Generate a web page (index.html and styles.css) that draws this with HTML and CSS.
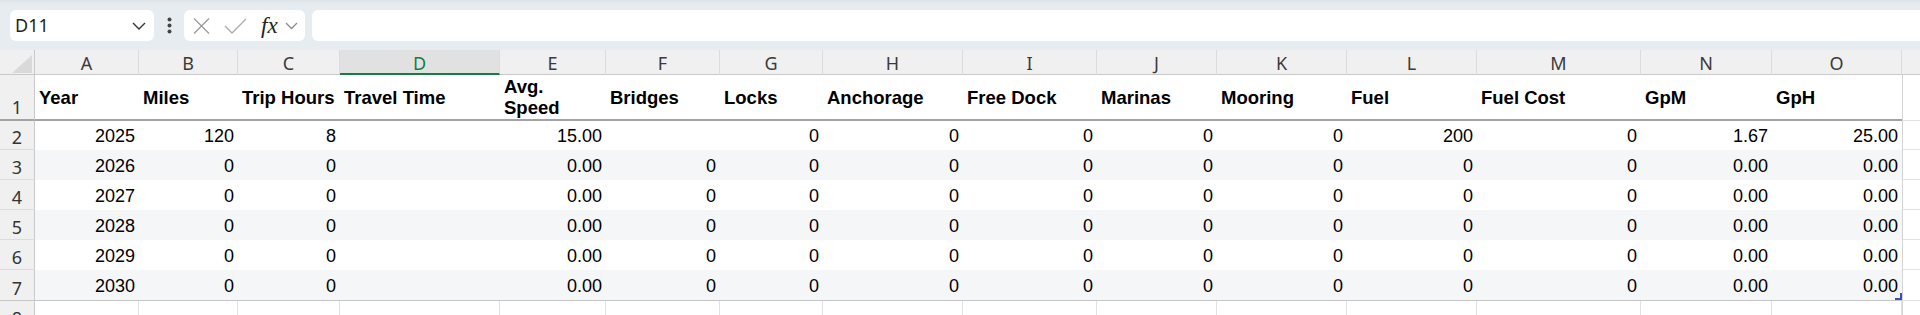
FILE: index.html
```html
<!DOCTYPE html>
<html lang="en">
<head>
  <meta charset="UTF-8" />
  <title>Trip Sheet</title>
  <link rel="stylesheet" href="styles.css">
</head>
<body>
<div class="toolbar">
  <div class="namebox">
    <span>D11</span>
    <svg class="chev" width="14" height="8" viewBox="0 0 14 8"><polyline points="1,1 7,7 13,1" fill="none" stroke="#333" stroke-width="1.4"/></svg>
  </div>
  <div class="more">
    <svg width="5" height="17" viewBox="0 0 5 17"><circle cx="2.5" cy="2.5" r="2" fill="#444"/><circle cx="2.5" cy="8.5" r="2" fill="#444"/><circle cx="2.5" cy="14.5" r="2" fill="#444"/></svg>
  </div>
  <div class="fxbox">
    <svg class="cancel" width="17" height="16" viewBox="0 0 17 16"><path d="M1 0.5 L16 15.5 M16 0.5 L1 15.5" stroke="#9b9b9b" stroke-width="1.3" fill="none"/></svg>
    <svg class="enter" width="23" height="16" viewBox="0 0 23 16"><polyline points="1,8 8,15 22,1" fill="none" stroke="#ababab" stroke-width="1.3"/></svg>
    <span class="fx">fx</span>
    <svg class="chev-sm" width="13" height="8" viewBox="0 0 13 8"><polyline points="1,1 6.5,6.5 12,1" fill="none" stroke="#8a8a8a" stroke-width="1.3"/></svg>
  </div>
  <div class="formula"></div>
</div>

<div class="sheet">
  <div class="row colhead">
    <div class="corner"><i></i></div>
    <div>A</div><div>B</div><div>C</div><div class="sel">D</div><div>E</div>
    <div>F</div><div>G</div><div>H</div><div>I</div><div>J</div>
    <div>K</div><div>L</div><div>M</div><div>N</div><div>O</div>
    <div class="pad"></div>
  </div>

  <div class="row head">
    <div class="num">1</div>
    <div>Year</div><div>Miles</div><div>Trip Hours</div><div>Travel Time</div><div>Avg.<br>Speed</div>
    <div>Bridges</div><div>Locks</div><div>Anchorage</div><div>Free Dock</div><div>Marinas</div>
    <div>Mooring</div><div>Fuel</div><div>Fuel Cost</div><div>GpM</div><div>GpH</div>
    <div class="pad"></div>
  </div>

  <div class="row data">
    <div class="num">2</div>
    <div>2025</div><div>120</div><div>8</div><div></div><div>15.00</div>
    <div></div><div>0</div><div>0</div><div>0</div><div>0</div>
    <div>0</div><div>200</div><div>0</div><div>1.67</div><div>25.00</div>
    <div class="pad"></div>
  </div>

  <div class="row data alt">
    <div class="num">3</div>
    <div>2026</div><div>0</div><div>0</div><div></div><div>0.00</div>
    <div>0</div><div>0</div><div>0</div><div>0</div><div>0</div>
    <div>0</div><div>0</div><div>0</div><div>0.00</div><div>0.00</div>
    <div class="pad"></div>
  </div>

  <div class="row data">
    <div class="num">4</div>
    <div>2027</div><div>0</div><div>0</div><div></div><div>0.00</div>
    <div>0</div><div>0</div><div>0</div><div>0</div><div>0</div>
    <div>0</div><div>0</div><div>0</div><div>0.00</div><div>0.00</div>
    <div class="pad"></div>
  </div>

  <div class="row data alt">
    <div class="num">5</div>
    <div>2028</div><div>0</div><div>0</div><div></div><div>0.00</div>
    <div>0</div><div>0</div><div>0</div><div>0</div><div>0</div>
    <div>0</div><div>0</div><div>0</div><div>0.00</div><div>0.00</div>
    <div class="pad"></div>
  </div>

  <div class="row data">
    <div class="num">6</div>
    <div>2029</div><div>0</div><div>0</div><div></div><div>0.00</div>
    <div>0</div><div>0</div><div>0</div><div>0</div><div>0</div>
    <div>0</div><div>0</div><div>0</div><div>0.00</div><div>0.00</div>
    <div class="pad"></div>
  </div>

  <div class="row data alt last">
    <div class="num">7</div>
    <div>2030</div><div>0</div><div>0</div><div></div><div>0.00</div>
    <div>0</div><div>0</div><div>0</div><div>0</div><div>0</div>
    <div>0</div><div>0</div><div>0</div><div>0.00</div><div class="corner-cell">0.00</div>
    <div class="pad"></div>
  </div>

  <div class="row blank">
    <div class="num">8</div>
    <div></div><div></div><div></div><div></div><div></div>
    <div></div><div></div><div></div><div></div><div></div>
    <div></div><div></div><div></div><div></div><div></div>
    <div class="pad"></div>
  </div>
</div>
</body>
</html>
```

FILE: styles.css
```css
* { box-sizing: border-box; margin: 0; padding: 0; }
html, body { height: 100%; overflow: hidden; background: #fff; }
body { font-family: "Liberation Sans", Arial, sans-serif; color: #000; }

/* formula bar */
.toolbar { height: 50px; display: flex; align-items: flex-start; padding: 10px 0 0 10px; background: linear-gradient(#dde2e7, #e7ecf1 4px); }
.namebox { width: 144px; height: 31px; background: #fff; border-radius: 6px; display: flex; align-items: center; justify-content: space-between; padding: 0 8px 0 5px; font-family: "Noto Sans", sans-serif; font-size: 18px; color: #1f1f1f; }
.namebox span { line-height: 31px; }
.more { width: 30px; height: 31px; display: flex; align-items: center; justify-content: center; }
.fxbox { width: 121px; height: 31px; background: #fff; border-radius: 6px; display: flex; align-items: center; padding-left: 9px; }
.fxbox .enter { margin-left: 14px; }
.fxbox .fx { margin-left: 14px; font-family: "Liberation Serif", serif; font-style: italic; font-size: 23px; color: #222; line-height: 31px; }
.fxbox .chev-sm { margin-left: 7px; }
.formula { flex: 1; height: 31px; margin-left: 7px; background: #fff; border-radius: 6px 0 0 6px; }

/* grid */
.sheet { display: grid; grid-template-columns: 35px 104px 99px 102px 160px 106px 114px 103px 140px 134px 120px 130px 130px 164px 131px 130px 1fr; grid-template-rows: 25px 46px 29px 30px 30px 30px 30px 31px 30px; }
.row { display: contents; }

.colhead > div { background: #f0f0f0; border-bottom: 1px solid #c9c9c9; border-right: 1px solid #dcdcdc; font-family: "Noto Sans", sans-serif; font-size: 18px; color: #3a3a3a; text-align: center; line-height: 22px; padding-top: 2px; }
.colhead > .sel { background: #e1e1e1; color: #137e43; border-bottom: 2px solid #137e43; }
.colhead > .corner { position: relative; border-right-color: #c9c9c9; }
.corner i { position: absolute; right: 2px; bottom: 1px; width: 20px; height: 18px; background: #d9d9d9; clip-path: polygon(100% 0, 100% 100%, 0 100%); }
.colhead > .pad { border-right: none; }

.num { background: #f0f0f0; border-right: 1px solid #c9c9c9; border-bottom: 1px solid #dcdcdc; font-family: "Noto Sans", sans-serif; font-size: 18px; color: #333; display: flex; align-items: flex-end; justify-content: center; line-height: 18px; padding-bottom: 3px; }

.head > div { font-weight: bold; font-size: 18.5px; line-height: 21px; padding-left: 4px; white-space: nowrap; display: flex; align-items: center; border-bottom: 2px solid #a3a3a3; }
.head > .num { font-weight: normal; font-size: 18px; line-height: 18px; align-items: flex-end; padding-left: 0; padding-bottom: 3px; }
.head > .pad, .data > .pad, .blank > .pad { border-left: 1px solid #d4d4d4; border-bottom: 1px solid #e1e1e1; }

.data > div { font-size: 18px; line-height: 20px; text-align: right; padding: 0 4px 4px 0; display: flex; align-items: flex-end; justify-content: flex-end; }
.data.alt > div { background: #f5f6f8; }
.data > .num { justify-content: center; padding: 0 0 3px; line-height: 18px; background: #f0f0f0; }
.data.alt > .num { background: #f0f0f0; }
.data > .pad, .data.alt > .pad { background: #fff; }
.data.last > div { border-bottom: 1px solid #c6c6c6; }
.data.last > .pad { border-bottom-color: #e1e1e1; }
.corner-cell { position: relative; }
.corner-cell::after { content: ""; position: absolute; right: 0; bottom: 0; width: 5px; height: 5px; border-right: 2px solid #3b4fb8; border-bottom: 2px solid #3b4fb8; }

.blank > div { border-right: 1px solid #e1e1e1; }
.blank > .num { border-right: 1px solid #c9c9c9; }
.blank > .pad { border-right: none; }
```
